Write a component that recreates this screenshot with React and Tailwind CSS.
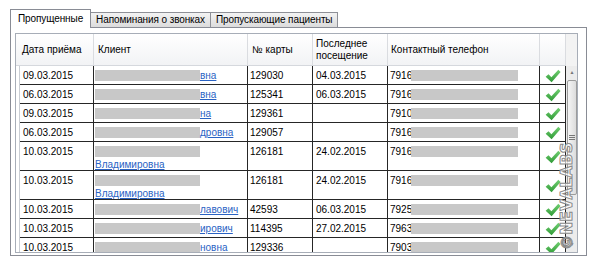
import React from 'react';

const rows = [
  { date: '09.03.2015', tail: 'вна', card: '129030', last: '04.03.2015', phone: '7916' },
  { date: '06.03.2015', tail: 'вна', card: '125341', last: '06.03.2015', phone: '7916' },
  { date: '09.03.2015', tail: 'на', card: '129361', last: '', phone: '7910' },
  { date: '06.03.2015', tail: 'дровна', card: '129057', last: '', phone: '7916' },
  { date: '10.03.2015', second: 'Владимировна', card: '126181', last: '24.02.2015', phone: '7916' },
  { date: '10.03.2015', second: 'Владимировна', card: '126181', last: '24.02.2015', phone: '7916' },
  { date: '10.03.2015', tail: 'лавович', card: '42593', last: '06.03.2015', phone: '7925' },
  { date: '10.03.2015', tail: 'ирович', card: '114395', last: '27.02.2015', phone: '7963' },
  { date: '10.03.2015', tail: 'новна', card: '129336', last: '', phone: '7903' },
];

const Check = () => (
  <svg width="16" height="14" viewBox="0 0 15 13">
    <defs>
      <linearGradient id="chk" x1="0" y1="0" x2="0" y2="1">
        <stop offset="0" stopColor="#72d072" />
        <stop offset="1" stopColor="#2f9a36" />
      </linearGradient>
    </defs>
    <path d="M0.6 7.2 L3.3 4.8 L6 7.6 L12.5 0.6 L14.6 2.7 L6.2 12.3 Z" fill="url(#chk)" />
  </svg>
);

const Blur = ({ w }) => <span className={`inline-block h-[11px] bg-[#c8c8c8] shrink-0 ${w}`} />;

const Tab = ({ active, children }) =>
  active ? (
    <div className="relative z-10 -mb-px h-[19px] px-[7px] pt-[2px] bg-white border border-b-0 border-[#898c95] leading-[13px] tracking-[-0.1px]">
      {children}
    </div>
  ) : (
    <div className="h-[15px] px-[5px] -ml-px bg-gradient-to-b from-[#f3f3f3] to-[#dcdcdc] border border-b-0 border-[#8e9097] leading-[13px] tracking-[-0.1px]">
      {children}
    </div>
  );

const App = () => {
  return (
    <div className="relative w-[593px] h-[266px] bg-white overflow-hidden text-[10px] text-black font-['Liberation_Sans',Arial,sans-serif]">
      <div className="pt-[9px] pl-[10px]">
        <div className="flex items-end">
          <Tab active>Пропущенные</Tab>
          <Tab>Напоминания о звонках</Tab>
          <Tab>Пропускающие пациенты</Tab>
        </div>
        <div className="w-[577px] h-[229px] border border-[#898c95] bg-white pt-[5px] pl-[4px]">
          <div className="w-[563px] h-[220px] border border-[#a7adb7] flex overflow-hidden">
            <div className="flex-1 flex flex-col">
              {/* header */}
              <div className="flex h-[32px] shrink-0 bg-gradient-to-b from-white to-[#f2f3f5] border-b border-[#d5d8dd]">
                <div className="w-[78px] border-r border-[#dadce0] flex items-center pl-[6px]">Дата приёма</div>
                <div className="w-[154px] border-r border-[#dadce0] flex items-center pl-[4px]">Клиент</div>
                <div className="w-[65px] border-r border-[#dadce0] flex items-center pl-[4px]">№ карты</div>
                <div className="w-[75px] border-r border-[#dadce0] flex items-center pl-[3px] leading-[12px]">
                  Последнее
                  <br />
                  посещение
                </div>
                <div className="w-[152px] border-r border-[#dadce0] flex items-center pl-[3px]">Контактный телефон</div>
                <div className="w-[26px] border-r border-[#dadce0]" />
              </div>
              {/* rows */}
              {rows.map((r, i) => (
                <div key={i} className={`flex shrink-0 ${r.second ? 'h-[29px]' : 'h-[19px]'}`}>
                  <div className="w-[4px] shrink-0 border-r border-[#c9cdd3]" />
                  <div className="w-[74px] border-r border-b border-[#262626] pt-[3px] pl-[3px] leading-[13px]">{r.date}</div>
                  <div className="w-[154px] border-r border-b border-[#262626] pt-[3px] pl-[1px] leading-[13px]">
                    {r.second ? (
                      <div className="flex flex-col">
                        <div className="h-[13px] flex items-center">
                          <Blur w="w-[105px]" />
                        </div>
                        <span className="text-[#2a63c4] underline">{r.second}</span>
                      </div>
                    ) : (
                      <div className="h-[13px] flex items-center">
                        <Blur w="w-[105px]" />
                        <span className="text-[#2a63c4] underline">{r.tail}</span>
                      </div>
                    )}
                  </div>
                  <div className="w-[65px] border-r border-b border-[#262626] pt-[3px] pl-[2px] leading-[13px]">{r.card}</div>
                  <div className="w-[75px] border-r border-b border-[#262626] pt-[3px] pl-[3px] leading-[13px]">{r.last}</div>
                  <div className="w-[152px] border-r border-b border-[#262626] pt-[3px] pl-[2px] leading-[13px]">
                    <div className="h-[13px] flex items-center">
                      <span className="w-[21px]">{r.phone}</span>
                      <Blur w="w-[107px]" />
                    </div>
                  </div>
                  <div className="w-[26px] border-r border-b border-[#262626] flex items-center justify-center pt-[1px]">
                    <Check />
                  </div>
                </div>
              ))}
            </div>
            {/* scrollbar */}
            <div className="w-[12px] shrink-0 flex flex-col bg-[#ececec]">
              <div className="h-[32px] bg-[#f3f3f3]" />
              <div className="h-[14px] flex items-center justify-center text-[5px] text-[#777]">▲</div>
              <div className="h-[115px] mx-[1px] rounded-[2px] border border-[#9c9c9c] bg-gradient-to-r from-[#f5f5f5] to-[#dcdcdc] flex items-center justify-center">
                <div className="flex flex-col gap-[1px]">
                  <span className="block w-[6px] h-px bg-[#777]" />
                  <span className="block w-[6px] h-px bg-[#777]" />
                  <span className="block w-[6px] h-px bg-[#777]" />
                </div>
              </div>
              <div className="flex-1" />
              <div className="h-[14px] flex items-center justify-center text-[5px] text-[#777]">▼</div>
            </div>
          </div>
        </div>
      </div>
      {/* watermark */}
      <div className="absolute left-[567px] top-[196px] -translate-x-1/2 -translate-y-1/2 -rotate-90 whitespace-nowrap text-[15px] font-bold tracking-[0.5px] text-white/70 [-webkit-text-stroke:1px_#8a8a8a] font-['DejaVu_Sans',sans-serif]">
        ©NEVALABS
      </div>
    </div>
  );
};

export default App;
